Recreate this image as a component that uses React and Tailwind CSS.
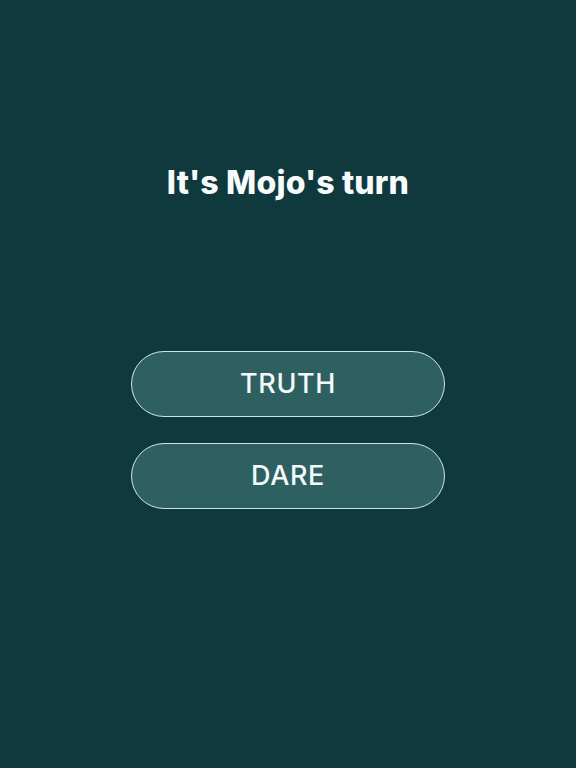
export default function App() {
  return (
    <div
      className="flex h-[768px] w-full flex-col items-center bg-[#0f393c] text-white"
      style={{ fontFamily: "Inter, 'Open Sans', sans-serif" }}
    >
      <h1 className="mt-[162px] text-[32px] font-extrabold leading-[42px] tracking-[0.2px] text-[#f7fbfb]">
        It's Mojo's turn
      </h1>

      <div className="mt-[147px] flex flex-col gap-[26px]">
        {["TRUTH", "DARE"].map((label) => (
          <button
            key={label}
            className="flex h-[66px] w-[314px] items-center justify-center rounded-full border border-[#cde6e3] bg-[#2f6061] text-[27px] font-medium tracking-[0.6px] text-[#f4fafa]"
          >
            {label}
          </button>
        ))}
      </div>
    </div>
  );
}
